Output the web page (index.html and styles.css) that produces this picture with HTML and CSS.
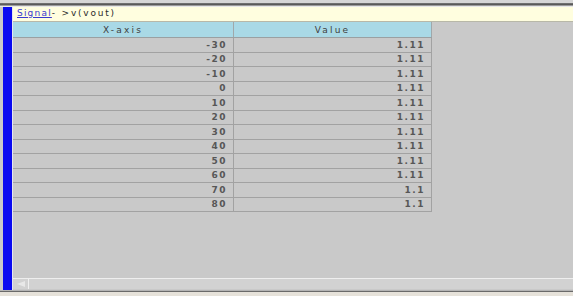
FILE: index.html
```html
<!DOCTYPE html>
<html>
<head>
<meta charset="utf-8">
<title>v(vout)</title>
<link rel="stylesheet" href="styles.css">
</head>
<body>
<div class="window">
  <div class="top-edge"></div>
  <div class="main">
    <div class="side-bar"></div>
    <div class="pane">
      <div class="title-bar"><a class="sig-link" href="#">Signal</a><span class="path">- &gt;v(vout)</span></div>
      <div class="view">
        <table class="grid">
          <thead>
            <tr><th class="col-x">X-axis</th><th class="col-v">Value</th></tr>
          </thead>
          <tbody>
            <tr><td>-30</td><td>1.11</td></tr>
            <tr><td>-20</td><td>1.11</td></tr>
            <tr><td>-10</td><td>1.11</td></tr>
            <tr><td>0</td><td>1.11</td></tr>
            <tr><td>10</td><td>1.11</td></tr>
            <tr><td>20</td><td>1.11</td></tr>
            <tr><td>30</td><td>1.11</td></tr>
            <tr><td>40</td><td>1.11</td></tr>
            <tr><td>50</td><td>1.11</td></tr>
            <tr><td>60</td><td>1.11</td></tr>
            <tr><td>70</td><td>1.1</td></tr>
            <tr><td>80</td><td>1.1</td></tr>
          </tbody>
        </table>
      </div>
      <div class="hscroll">
        <div class="arrow-btn"><span class="arrow-left"></span></div>
        <div class="track"></div>
      </div>
    </div>
  </div>
  <div class="bottom-edge"></div>
</div>
</body>
</html>
```

FILE: styles.css
```css
html, body {
  margin: 0;
  padding: 0;
  background: #c9c9c9;
}

.window {
  width: 573px;
  height: 296px;
  display: flex;
  flex-direction: column;
  font-family: "DejaVu Sans", Verdana, sans-serif;
  font-size: 9px;
  letter-spacing: 1.5px;
  color: #3a3a3a;
}

.top-edge {
  height: 7px;
  flex: none;
  background: linear-gradient(to bottom,
    #d6d6d6 0, #d6d6d6 3px,
    #7a7a7a 3px, #4e4e4e 5px,
    #9a9a9a 5px, #9a9a9a 6px,
    #e8e8e8 6px);
}

.main {
  flex: 1;
  display: flex;
  min-height: 0;
}

.side-bar {
  width: 9px;
  flex: none;
  margin-left: 3px;
  background: #0a0af0;
  border-right: 1px solid #e6e6f0;
}

.pane {
  flex: 1;
  display: flex;
  flex-direction: column;
  min-width: 0;
}

.title-bar {
  height: 14px;
  flex: none;
  background: #fffedf;
  border-bottom: 1px solid #b8b8a8;
  padding-left: 4px;
  line-height: 13px;
  color: #2a2a2a;
  white-space: nowrap;
}

.sig-link {
  color: #3a3ad0;
  text-decoration: underline;
  letter-spacing: 1.2px;
}

.path {
  letter-spacing: 1.8px;
}

.view {
  flex: 1;
  min-height: 0;
}

.grid {
  border-collapse: collapse;
  width: 418px;
  table-layout: fixed;
}

.grid th {
  background: #a9d9e6;
  font-weight: normal;
  height: 15px;
  padding: 0;
  text-align: center;
  color: #404040;
  letter-spacing: 2.2px;
  border-right: 1px solid #a0a8aa;
  border-bottom: 1px solid #9aa0a2;
}

.col-x { width: 220px; }
.col-v { width: 197px; }

.grid td {
  height: 13.5px;
  padding: 0 6px 0 0;
  line-height: 12px;
  text-align: right;
  border-right: 1px solid #a2a2a2;
  border-bottom: 1px solid #a2a2a2;
  font-weight: bold;
  color: #575757;
  letter-spacing: 1.5px;
}

.hscroll {
  height: 10px;
  flex: none;
  display: flex;
  border-top: 1px solid #eeeeee;
  background: #d2d2d2;
  margin-bottom: 1px;
}

.arrow-btn {
  width: 15px;
  flex: none;
  display: flex;
  align-items: center;
  justify-content: center;
  border-right: 1px solid #f0f0f0;
}

.arrow-left {
  width: 0;
  height: 0;
  border-top: 3px solid transparent;
  border-bottom: 3px solid transparent;
  border-right: 8px solid #e8e8e8;
}

.track {
  flex: 1;
}

.bottom-edge {
  height: 6px;
  flex: none;
  background: linear-gradient(to bottom,
    #b4b4b4 0, #b4b4b4 1px,
    #6a6a6a 1px, #6a6a6a 2px,
    #e6e2da 2px);
}
```
